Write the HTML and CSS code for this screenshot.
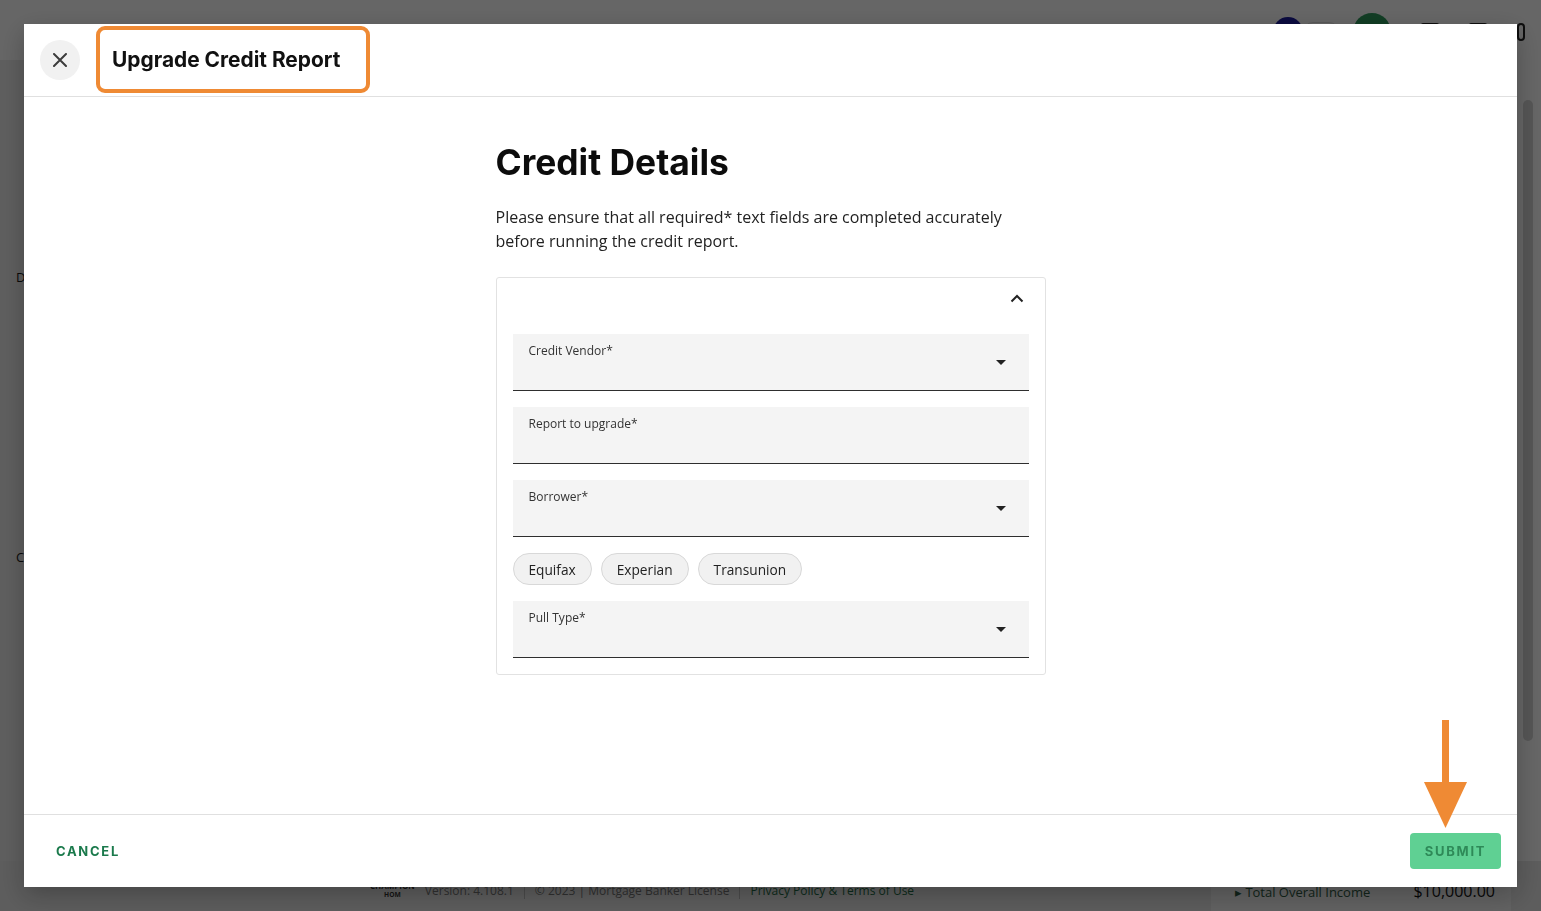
FILE: index.html
```html
<!DOCTYPE html>
<html lang="en">
<head>
    <meta charset="UTF-8">
    <meta name="viewport" content="width=device-width, initial-scale=1.0">
    <title>Upgrade Credit Report</title>
    <link rel="stylesheet" href="styles.css">
</head>
<body>

<!-- page behind the dialog -->
<div class="app">
    <header class="app-bar">
        <div class="search"></div>
        <div class="app-actions">
            <span class="avatar navy"></span>
            <span class="toggle"></span>
            <span class="avatar green"></span>
            <span class="tool"></span>
            <span class="tool"></span>
            <span class="tool small"></span>
        </div>
    </header>
    <main class="app-main">
        <aside class="side">
            <span class="side-letter first">D</span>
            <span class="side-letter second">C</span>
        </aside>
        <div class="scroll-track"></div>
    </main>
    <footer class="app-footer">
        <div class="legal">
            <span class="brand">CHAMPION<br><small>HOM</small></span>
            <span>Version: 4.108.1</span>
            <span class="sep"></span>
            <span>© 2023 | Mortgage Banker License</span>
            <span class="sep"></span>
            <span class="legal-link">Privacy Policy &amp; Terms of Use</span>
        </div>
        <div class="income">
            <span class="income-label">▸ Total Overall Income</span>
            <span class="income-value">$10,000.00</span>
        </div>
    </footer>
</div>

<div class="backdrop"></div>

<div class="dialog">
    <div class="dialog-head">
        <button class="close-btn" type="button" aria-label="Close">
            <svg width="14" height="14" viewBox="0 0 14 14"><path d="M1 1L13 13M13 1L1 13" stroke="#3c3c3c" stroke-width="2" stroke-linecap="round"/></svg>
        </button>
        <div class="title-box">
            <h2 class="dialog-title">Upgrade Credit Report</h2>
        </div>
    </div>

    <div class="dialog-body">
        <div class="form-col">
            <h1 class="form-title">Credit Details</h1>
            <p class="form-intro">Please ensure that all required* text fields are completed accurately before running the credit report.</p>

            <div class="card">
                <div class="card-head">
                    <svg width="14" height="9" viewBox="0 0 14 9"><path d="M1.5 7.5L7 2L12.5 7.5" fill="none" stroke="#222" stroke-width="2"/></svg>
                </div>
                <div class="field select">
                    <label>Credit Vendor*</label>
                    <span class="caret"></span>
                </div>
                <div class="field">
                    <label>Report to upgrade*</label>
                </div>
                <div class="field select">
                    <label>Borrower*</label>
                    <span class="caret"></span>
                </div>
                <div class="chips">
                    <span class="chip">Equifax</span>
                    <span class="chip">Experian</span>
                    <span class="chip">Transunion</span>
                </div>
                <div class="field select">
                    <label>Pull Type*</label>
                    <span class="caret"></span>
                </div>
            </div>
        </div>
    </div>

    <div class="dialog-foot">
        <button class="btn-text" type="button">Cancel</button>
        <button class="btn-submit" type="button">Submit</button>
    </div>

    <!-- annotation arrow -->
    <svg class="pointer" width="44" height="110" viewBox="0 0 44 110">
        <rect x="18" y="0" width="7" height="66" fill="#ef8a34"/>
        <polygon points="0,62 43,62 21.5,108" fill="#ef8a34"/>
    </svg>
</div>

</body>
</html>
```

FILE: styles.css
```css
* {
    box-sizing: border-box;
}
body {
    margin: 0;
    font-family: "Open Sans", "Noto Sans", sans-serif;
    color: #1a1a1a;
    background: #fff;
    overflow: hidden;
}

/* background app */
.app {
    display: flex;
    flex-direction: column;
    height: 100vh;
}
.app-bar {
    height: 60px;
    display: flex;
    align-items: flex-start;
    justify-content: space-between;
    padding: 12px 20px 0 20px;
    background: #fff;
}
.search {
    width: 300px;
    height: 120px;
    border: 2px solid #ddd;
    border-radius: 12px;
    margin-top: 70px;
}
.app-actions {
    display: flex;
    align-items: center;
    gap: 14px;
    margin-top: 1px;
    margin-right: -4px;
}
.avatar {
    display: block;
    border-radius: 50%;
}
.avatar.navy {
    width: 30px;
    height: 30px;
    background: #1b1b9e;
}
.avatar.green {
    width: 38px;
    height: 38px;
    background: #2e9a5c;
}
.toggle {
    width: 36px;
    height: 20px;
    border: 1px solid #ddd;
    border-radius: 10px;
    margin-left: -14px;
}
.tool {
    width: 18px;
    height: 18px;
    border: 2px solid #222;
    border-radius: 2px;
    margin-left: 16px;
}
.tool.small {
    width: 8px;
    border-radius: 4px;
}
.app-main {
    flex: 1;
    display: flex;
    justify-content: space-between;
}
.side {
    width: 90px;
    background: #ececec;
    display: flex;
    flex-direction: column;
    padding: 208px 0 0 16px;
    font-size: 13px;
}
.side-letter.second {
    margin-top: 262px;
}
.scroll-track {
    width: 10px;
    margin: 40px 8px 120px 0;
    border-radius: 5px;
    background: #d6d6d6;
}
.app-footer {
    height: 50px;
    display: flex;
    justify-content: space-between;
    align-items: flex-start;
    padding: 0 30px 0 370px;
    font-size: 12px;
    color: #777;
    background: #e8e8e8;
}
.legal {
    display: flex;
    align-items: center;
    gap: 10px;
    padding-top: 20px;
}
.brand {
    font-size: 8px;
    font-weight: 700;
    text-align: center;
    line-height: 1;
    color: #333;
}
.sep {
    width: 1px;
    height: 18px;
    background: #bbb;
}
.legal-link {
    color: #1d6b45;
}
.income {
    width: 300px;
    height: 50px;
    display: flex;
    justify-content: space-between;
    padding: 22px 16px 0 24px;
    background: #f5f5f5;
    font-size: 13px;
}
.income-label {
    color: #2d5a44;
}
.income-value {
    font-size: 16px;
    color: #111;
    margin-top: -3px;
}
.backdrop {
    position: fixed;
    inset: 0;
    background: rgba(0, 0, 0, 0.6);
}

/* dialog */
.dialog {
    position: fixed;
    top: 24px;
    left: 24px;
    right: 24px;
    bottom: 24px;
    background: #fff;
    display: flex;
    flex-direction: column;
    box-shadow: 0 8px 24px rgba(0, 0, 0, 0.25);
}
.dialog-head {
    height: 73px;
    flex-shrink: 0;
    display: flex;
    align-items: center;
    gap: 16px;
    padding: 0 16px;
    border-bottom: 1px solid #e0e0e0;
}
.close-btn {
    width: 40px;
    height: 40px;
    border: 0;
    border-radius: 50%;
    background: #f1f1f1;
    display: flex;
    align-items: center;
    justify-content: center;
    padding: 0;
    margin-top: -1px;
}
.title-box {
    height: 67px;
    border: 4px solid #ef8a34;
    border-radius: 9px;
    padding: 0 26px 0 12px;
    display: flex;
    align-items: center;
    margin-top: -1px;
}
.dialog-title {
    margin: 0;
    font-family: "Inter", sans-serif;
    font-size: 20.9px;
    font-weight: 700;
    color: #111;
}
.dialog-body {
    flex: 1;
    display: flex;
    justify-content: center;
}
.form-col {
    width: 550px;
    padding-top: 42px;
}
.form-title {
    margin: 0;
    font-family: "Inter", sans-serif;
    font-size: 35.4px;
    font-weight: 700;
    line-height: 48px;
    color: #0c0c0c;
}
.form-intro {
    margin: 18px 0 24px;
    font-size: 16px;
    line-height: 24px;
    color: #222;
    width: 530px;
}
.card {
    border: 1px solid #e2e2e2;
    border-radius: 3px;
    padding: 0 16px 16px;
    display: flex;
    flex-direction: column;
    gap: 16px;
}
.card-head {
    height: 40px;
    display: flex;
    align-items: center;
    justify-content: flex-end;
    padding-right: 5px;
}
.field {
    height: 57px;
    background: #f4f4f4;
    border-bottom: 1px solid #2e2e2e;
    display: flex;
    justify-content: space-between;
    align-items: flex-start;
    padding: 8px 23px 0 16px;
}
.field label {
    font-size: 12px;
    color: #333;
}
.caret {
    margin-top: 18px;
    width: 0;
    height: 0;
    border-left: 5px solid transparent;
    border-right: 5px solid transparent;
    border-top: 5px solid #222;
}
.chips {
    display: flex;
    gap: 9px;
}
.chip {
    height: 32px;
    padding: 0 15px;
    display: flex;
    align-items: center;
    font-size: 13.7px;
    color: #222;
    background: #f1f1f1;
    border: 1px solid #d8d8d8;
    border-radius: 16px;
}
.dialog-foot {
    height: 73px;
    flex-shrink: 0;
    display: flex;
    justify-content: space-between;
    align-items: center;
    padding: 0 16px 0 24px;
    border-top: 1px solid #e0e0e0;
}
.btn-text,
.btn-submit {
    font-family: "Inter", sans-serif;
    font-size: 13px;
    font-weight: 700;
    letter-spacing: 1.7px;
    text-transform: uppercase;
    border: 0;
    border-radius: 4px;
    height: 36px;
}
.btn-text {
    background: none;
    color: #1b7a4c;
    padding: 0 8px;
}
.btn-submit {
    width: 91px;
    background: #5fd093;
    color: #2e8a58;
}
.pointer {
    position: absolute;
    right: 49px;
    bottom: 57px;
}
```
